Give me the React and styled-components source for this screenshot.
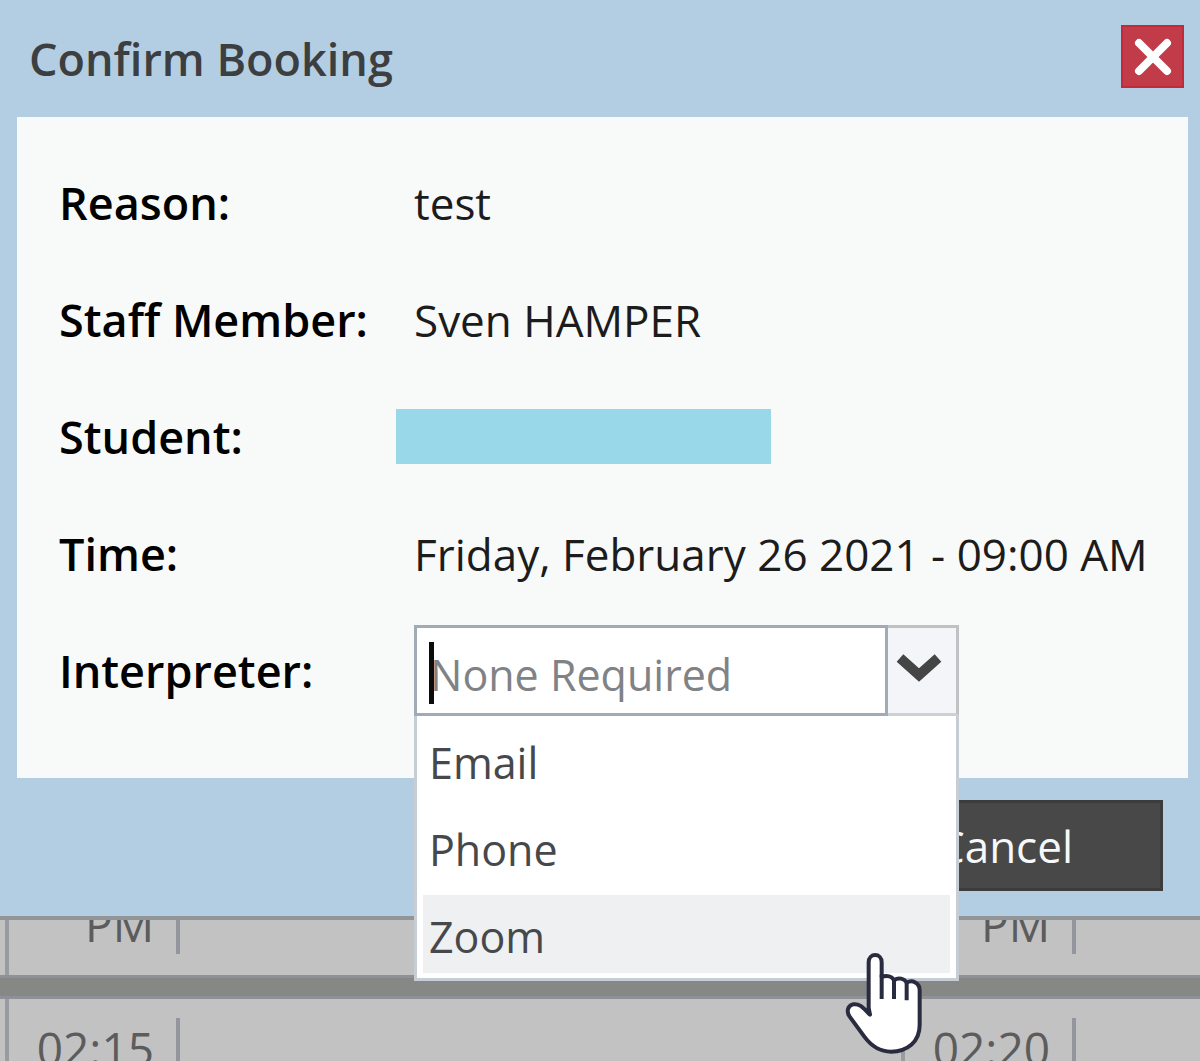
import React, { useState } from "react";
import styled, { createGlobalStyle } from "styled-components";

const GlobalStyle = createGlobalStyle`
  *, *::before, *::after { box-sizing: border-box; }
  body {
    margin: 0;
    background: #c2c2c2;
    font-family: "Open Sans", "Noto Sans", sans-serif;
    font-size: 44px;
    line-height: 60px;
  }
  button, input { font: inherit; margin: 0; }
`;

const Page = styled.div`
  height: 100vh;
  overflow: hidden;
  display: flex;
  flex-direction: column;
`;

const Dialog = styled.section`
  flex: none;
  background: #b3cee2;
  border-bottom: 4px solid #929598;
`;

const DialogHeader = styled.header`
  display: flex;
  justify-content: space-between;
  align-items: flex-start;
  height: 117px;
  padding: 25px 16px 0 29px;
`;

const Title = styled.h1`
  margin: 0;
  font-size: 45px;
  font-weight: 600;
  line-height: 68px;
  color: #3c3e40;
`;

const CloseButton = styled.button`
  width: 63px;
  height: 63px;
  padding: 0;
  display: grid;
  place-items: center;
  border: 2px solid #bf2b3a;
  background: #c13b49;
`;

const Panel = styled.div`
  margin: 0 12px 0 17px;
  padding: 27px 0 49px 42px;
  background: #f8faf9;
`;

const Row = styled.div`
  display: grid;
  grid-template-columns: 355px 1fr;
  align-items: center;
  height: 117px;
`;

const labelStyles = `
  font-size: 45px;
  font-weight: 600;
  color: #000;
`;

const Label = styled.label`
  ${labelStyles}
`;

const Term = styled.span`
  ${labelStyles}
`;

const Value = styled.span`
  white-space: nowrap;
  color: #1c1c1c;
`;

const Redacted = styled.span`
  width: 375px;
  height: 55px;
  margin-left: -18px;
  background: #99d8e9;
`;

const Combo = styled.div`
  position: relative;
  display: flex;
  width: 545px;
  height: 91px;
`;

const ComboInput = styled.input`
  flex: 1;
  min-width: 0;
  padding: 8px 13px 0;
  border: 3px solid #a0abb6;
  border-radius: 0;
  background: #fff;
  outline: none;
  font-size: 43px;
  color: #444;
  &::placeholder { color: #808285; opacity: 1; }
`;

const Caret = styled.span`
  position: absolute;
  left: 15px;
  top: 17px;
  width: 5px;
  height: 62px;
  background: #0c0c0c;
`;

const ComboToggle = styled.button`
  width: 71px;
  padding: 0 6px 6px 0;
  display: grid;
  place-items: center;
  border: 3px solid #c0c1c3;
  border-bottom-color: #cdd1d6;
  border-left: 0;
  background: #f4f5f8;
`;

const Options = styled.ul`
  position: absolute;
  z-index: 2;
  top: 91px;
  left: 0;
  right: 0;
  margin: 0;
  padding: 5px 6px;
  list-style: none;
  display: grid;
  gap: 9px;
  background: #fff;
  border: 3px solid #c6cdd5;
  border-top: 0;
`;

const Option = styled.li`
  height: 78px;
  padding: 6px 6px 0;
  font-size: 43px;
  line-height: 72px;
  color: #46484b;
  background: ${(p) => (p.$active ? "#eef0f2" : "transparent")};
`;

const Pointer = styled.svg`
  position: absolute;
  z-index: 3;
  left: 429px;
  top: 323px;
  pointer-events: none;
`;

const DialogFooter = styled.footer`
  display: flex;
  justify-content: flex-end;
  padding: 22px 37px 25px;
`;

const CancelButton = styled.button`
  width: 316px;
  height: 91px;
  padding: 0;
  border: 3px solid #3c3c3c;
  background: #484848;
  color: #f6f8fa;
  font-weight: 500;
`;

const SlotRow = styled.div`
  flex: ${(p) => (p.$end ? "none" : "1")};
  height: ${(p) => (p.$end ? "55px" : "auto")};
  min-height: 0;
  display: flex;
  align-items: ${(p) => (p.$end ? "flex-end" : "flex-start")};
  padding-left: 5px;
  overflow: hidden;
  background: #c2c2c2;
`;

const Slot = styled.div`
  flex: none;
  width: 896px;
  padding: 19px 0 21px;
  border-left: 4px solid #999ba3;
`;

const SlotTime = styled.time`
  display: block;
  width: 171px;
  padding-right: 22px;
  text-align: right;
  font-size: 46px;
  color: #5c5c5c;
  border-right: 4px solid #93969d;
`;

const Divider = styled.div`
  flex: none;
  height: 24px;
  background: #868886;
  border: solid #8e9197;
  border-width: 3px 0;
`;

const options = ["Email", "Phone", "Zoom"];

const details = [
  ["Reason:", "test"],
  ["Staff Member:", "Sven HAMPER"],
  ["Student:", null],
  ["Time:", "Friday, February 26 2021 - 09:00 AM"],
];

function Interpreter() {
  const [text, setText] = useState("");
  const [active, setActive] = useState("Zoom");
  return (
    <Combo>
      <ComboInput
        id="interpreter"
        role="combobox"
        aria-expanded="true"
        aria-controls="interpreter-options"
        placeholder="None Required"
        value={text}
        onChange={(e) => setText(e.target.value)}
      />
      <Caret />
      <ComboToggle type="button" aria-label="Show options">
        <svg width="46" height="30" viewBox="0 0 46 30">
          <path d="M4 5 L23 22 L42 5" fill="none" stroke="#454545" strokeWidth="10" />
        </svg>
      </ComboToggle>
      <Options id="interpreter-options" role="listbox">
        {options.map((o) => (
          <Option
            key={o}
            role="option"
            aria-selected={o === active}
            $active={o === active}
            onMouseEnter={() => setActive(o)}
            onClick={() => setText(o)}
          >
            {o}
          </Option>
        ))}
      </Options>
      <Pointer width="84" height="108" viewBox="190 205 252 324" aria-hidden="true">
        <path
          d="M271 405 L267 385 V248 C267 219 306 219 306 248 V292 C322 286 337 290 343 302 C356 292 374 296 381 309 C398 299 420 310 420 332 V436 C420 488 382 515 334 516 C300 516 274 498 254 471 L210 411 C200 397 203 378 220 374 C240 370 252 386 271 405 Z"
          fill="#fff"
          stroke="#292b3f"
          strokeWidth="12"
          strokeLinejoin="round"
        />
        <path d="M306 285 V358 M343 302 V358 M381 309 V362" fill="none" stroke="#292b3f" strokeWidth="12" />
      </Pointer>
    </Combo>
  );
}

export default function App() {
  return (
    <Page>
      <GlobalStyle />
      <Dialog role="dialog" aria-labelledby="dialog-title">
        <DialogHeader>
          <Title id="dialog-title">Confirm Booking</Title>
          <CloseButton type="button" aria-label="Close">
            <svg width="38" height="38" viewBox="0 0 38 38">
              <path d="M5 5 L33 33 M33 5 L5 33" stroke="#fff" strokeWidth="8" strokeLinecap="round" />
            </svg>
          </CloseButton>
        </DialogHeader>
        <Panel>
          {details.map(([label, value]) => (
            <Row key={label}>
              <Term>{label}</Term>
              {value ? <Value>{value}</Value> : <Redacted />}
            </Row>
          ))}
          <Row>
            <Label htmlFor="interpreter">Interpreter:</Label>
            <Interpreter />
          </Row>
        </Panel>
        <DialogFooter>
          <CancelButton type="button">Cancel</CancelButton>
        </DialogFooter>
      </Dialog>
      <SlotRow $end>
        <Slot><SlotTime>PM</SlotTime></Slot>
        <Slot><SlotTime>PM</SlotTime></Slot>
      </SlotRow>
      <Divider />
      <SlotRow>
        <Slot><SlotTime>02:15</SlotTime></Slot>
        <Slot><SlotTime>02:20</SlotTime></Slot>
      </SlotRow>
    </Page>
  );
}
